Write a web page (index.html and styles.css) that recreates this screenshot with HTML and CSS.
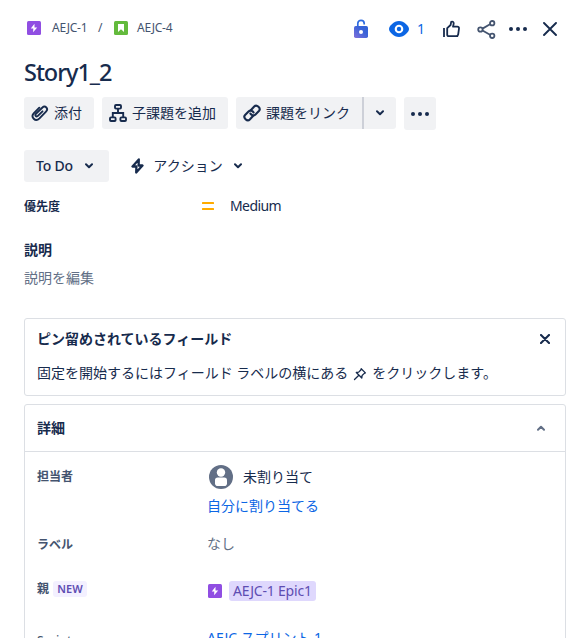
FILE: index.html
```html
<!DOCTYPE html>
<html lang="ja">
<head>
<meta charset="utf-8">
<title>Story1_2</title>
<link rel="stylesheet" href="styles.css">
</head>
<body>
<main class="issue">
  <header class="topbar">
    <nav class="crumbs">
      <svg class="type" width="14" height="14" viewBox="0 0 14 14"><rect width="14" height="14" rx="1.5" fill="#904ee2"/><path d="M7.500 2.700 3.800 7.500h2.500l-.2 3.800L10.200 6.400H7.500z" fill="#fff"/></svg>
      <span class="key">AEJC-1</span>
      <span class="slash">/</span>
      <svg class="type" width="14" height="14" viewBox="0 0 14 14"><rect width="14" height="14" rx="1.5" fill="#63ba3c"/><path d="M4 3h6v8L7 8.300 4 11z" fill="#fff"/></svg>
      <span class="key">AEJC-4</span>
    </nav>
    <div class="tools">
      <svg class="lock" width="14" height="20" viewBox="0 0 14 20"><defs><linearGradient id="lk" x1="0" y1="1" x2="1" y2="0"><stop offset="0" stop-color="#8270db"/><stop offset=".6" stop-color="#3b63d8"/><stop offset="1" stop-color="#2d62d8"/></linearGradient></defs><path d="M3.800 8V4.500C3.800 .2 10.200 .2 10.200 4.500V5.600" fill="none" stroke="#2d6be0" stroke-width="1.700"/><rect y="7" width="14" height="12" rx="1.700" fill="url(#lk)"/><circle cx="7" cy="13" r="2" fill="#fff"/></svg>
      <svg class="eye" width="20" height="16" viewBox="0 0 20 16"><path d="M10 0C4.800 0 0 5.200 0 8s4.800 8 10 8 10-5.200 10-8S15.200 0 10 0z" fill="#0c66e4"/><circle cx="10" cy="8" r="4.300" fill="#fff"/><circle cx="10" cy="8" r="2.200" fill="#0c66e4"/></svg>
      <span class="count">1</span>
      <svg class="thumb" width="17" height="18" viewBox="0 0 17 18"><g fill="none" stroke="#172b4d" stroke-width="1.800" stroke-linejoin="round"><path d="M1 8v9"/><path d="M4.200 8.200 7.600 5 8.200 1.900Q10.800 1 10.700 3.600L10 6.700h4.300q1.800 0 1.700 1.800l-.8 5.800q-.3 1.900-2 1.900H6q-1.800 0-1.800-1.800z"/></g></svg>
      <svg class="share" width="19" height="19" viewBox="0 0 19 19"><g fill="none" stroke="#44546f" stroke-width="1.800"><path d="M5.500 8.600 13 4.300M5.500 10.500l7.500 4.200"/><circle cx="3.400" cy="9.500" r="2.200"/><circle cx="15.200" cy="3.200" r="2.200"/><circle cx="15.200" cy="15.800" r="2.200"/></g></svg>
      <svg class="more" width="18" height="4" viewBox="0 0 18 4" fill="#172b4d"><circle cx="2" cy="2" r="2"/><circle cx="9" cy="2" r="2"/><circle cx="16" cy="2" r="2"/></svg>
      <svg class="close" width="14" height="14" viewBox="0 0 14 14"><path d="m1 1 12 12M13 1 1 13" stroke="#172b4d" stroke-width="1.900" stroke-linecap="round"/></svg>
    </div>
  </header>

  <h1 class="title">Story1_2</h1>

  <div class="actions">
    <button class="btn attach"><svg width="18" height="18" viewBox="0 0 18 18"><path d="m11.500 6.300-4.600 4.600c-1.500 1.500-3.400-.5-2-2l6.300-6.200c3-2.800 6.700 1 3.800 3.900L8.500 13.400c-4.200 4.100-9.300-1.400-5.600-5.300L8.300 2.700" fill="none" stroke="#172b4d" stroke-width="1.900" stroke-linecap="round" transform="translate(0 1)"/></svg><span>添付</span></button>
    <button class="btn child"><svg width="18" height="18" viewBox="0 0 18 18"><g fill="none" stroke="#172b4d" stroke-width="1.900"><rect x="6" y="1" width="6" height="3.600" rx="1"/><rect x="1" y="13.400" width="5.600" height="3.600" rx="1"/><rect x="11.400" y="13.400" width="5.600" height="3.600" rx="1"/><path d="M9 4.600V9M3.800 13.400V9h10.400v4.400"/></g></svg><span>子課題を追加</span></button>
    <div class="split">
      <button class="btn link"><svg width="18" height="18" viewBox="0 0 18 18"><g fill="none" stroke="#172b4d" stroke-width="2.100" stroke-linecap="round"><path d="M8 6 11.200 2.500c2.600-2.500 7.200 1.800 4.700 4.500L12.500 10.500C10.900 12 8.300 11.500 7.400 9.500"/><path d="M10 12 6.800 15.500C4.200 18 -.4 13.700 2.100 11L5.500 7.500C7.100 6 9.700 6.500 10.600 8.500"/></g></svg><span>課題をリンク</span></button>
      <button class="btn drop"><svg width="8" height="6" viewBox="0 0 8 6"><path d="m1 1.300 3 2.900 3-2.900" class="chev"/></svg></button>
    </div>
    <button class="btn dots"><svg width="18" height="4" viewBox="0 0 18 4" fill="#172b4d"><circle cx="2" cy="2" r="2"/><circle cx="9" cy="2" r="2"/><circle cx="16" cy="2" r="2"/></svg></button>
  </div>

  <div class="status-row">
    <button class="btn status"><span>To Do</span><svg width="8" height="6" viewBox="0 0 8 6"><path d="m1 1.300 3 2.900 3-2.900" class="chev"/></svg></button>
    <button class="automation"><svg width="13" height="16" viewBox="0 0 13 16"><path d="M7.800 1.500 1.500 8.500h3.900L5.200 14.500l6.300-7H7.600z" fill="none" stroke="#172b4d" stroke-width="2.300" stroke-linejoin="round"/></svg><span>アクション</span><svg width="8" height="6" viewBox="0 0 8 6"><path d="m1 1.300 3 2.900 3-2.900" class="chev"/></svg></button>
  </div>

  <div class="priority">
    <span class="priority-label">優先度</span>
    <svg width="12" height="8" viewBox="0 0 12 8" fill="#ffab00"><rect width="12" height="2" rx=".5"/><rect y="6" width="12" height="2" rx=".5"/></svg>
    <span class="medium">Medium</span>
  </div>

  <h2 class="desc-title">説明</h2>
  <p class="desc-edit">説明を編集</p>

  <section class="panel pinned">
    <div class="pinned-head"><h2>ピン留めされているフィールド</h2><svg width="10" height="10" viewBox="0 0 10 10"><path d="m1 1 8 8M9 1 1 9" stroke="#172b4d" stroke-width="2.100" stroke-linecap="round"/></svg></div>
    <p class="pinned-text"><span>固定を開始するにはフィールド ラベルの横にある</span><svg width="14" height="14" viewBox="0 0 14 14"><path d="m8.200 1.700 4.200 4.200-1.100.5-2.200 2.100-.3 2.500-5.500-5.500 2.400-.4L7.800 3zM5.600 8.500 1.500 12.500" fill="none" stroke="#172b4d" stroke-width="1.300" stroke-linejoin="round" stroke-linecap="round"/></svg><span>をクリックします。</span></p>
  </section>

  <section class="panel details">
    <div class="details-head"><h2>詳細</h2><svg width="8" height="6" viewBox="0 0 8 6"><path d="m1 4.700 3-2.900 3 2.900" class="chev muted"/></svg></div>
    <dl class="fields">
      <div class="field assignee"><dt>担当者</dt><dd>
        <div class="person"><svg width="24" height="24" viewBox="0 0 24 24"><circle cx="12" cy="12" r="12" fill="#626f86"/><circle cx="12" cy="7.500" r="4.200" fill="#fff"/><rect x="6" y="12.500" width="12" height="8.500" rx="2.800" fill="#fff"/></svg><span>未割り当て</span></div>
        <a class="blue">自分に割り当てる</a></dd></div>
      <div class="field labels"><dt>ラベル</dt><dd>なし</dd></div>
      <div class="field parent"><dt>親<span class="new">NEW</span></dt><dd><svg width="14" height="14" viewBox="0 0 14 14"><rect width="14" height="14" rx="1.500" fill="#904ee2"/><path d="M7.500 2.700 3.800 7.500h2.500l-.2 3.800L10.200 6.400H7.500z" fill="#fff"/></svg><a class="epic">AEJC-1 Epic1</a></dd></div>
      <div class="field sprint"><dt>Sprint</dt><dd><a class="blue">AEJC スプリント 1</a></dd></div>
    </dl>
  </section>
</main>
</body>
</html>
```
FILE: styles.css
```css
* { box-sizing: border-box; }
html, body { margin: 0; height: 638px; overflow: hidden; background: #fff; }
body { font: 14px/20px "Noto Sans", "Noto Sans CJK JP", sans-serif; color: #172b4d; }
h1, h2, p, dl, dd { margin: 0; }
h2 { font-size: 14px; line-height: 20px; font-weight: 600; }
svg { display: block; flex: none; }
button { border: 0; margin: 0; padding: 0; background: none; font: inherit; color: inherit; display: flex; align-items: center; white-space: nowrap; }
.issue { height: 638px; overflow: hidden; padding: 12px 12px 0 24px; display: flex; flex-direction: column; }
.issue > * { flex: none; }
.chev { fill: none; stroke: #172b4d; stroke-width: 2; stroke-linecap: round; stroke-linejoin: round; }
.muted { stroke: #626f86; }

.topbar { height: 34px; display: flex; justify-content: space-between; align-items: center; padding: 0 9px 0 3px; }
.crumbs { display: flex; align-items: center; height: 34px; padding-bottom: 2px; font-size: 12px; color: #44546f; }
.type { margin-right: 11px; }
.key { width: 37px; letter-spacing: -.2px; white-space: nowrap; }
.slash { width: 5px; margin: 0 11px 0 9px; }
.crumbs .slash + .type { margin-right: 9px; }
.tools { display: flex; align-items: center; }
.eye { margin-left: 21px; }
.count { width: 8px; margin-left: 8px; color: #0c66e4; }
.thumb { margin-left: 18px; }
.share { margin-left: 17px; }
.more { margin-left: 13px; }
.close { margin-left: 16px; }

.title { margin-top: 12px; height: 28px; font-size: 23.5px; line-height: 28px; font-weight: 500; letter-spacing: -1.05px; }
.actions { margin-top: 11px; height: 33px; display: flex; align-items: flex-start; gap: 8px; }
.btn { height: 32px; background: #f1f2f4; border-radius: 3px; }
.attach { width: 70px; padding-left: 7px; gap: 5px; }
.child { width: 126px; padding-left: 7px; gap: 5px; }
.split { display: flex; }
.link { width: 126px; padding-left: 7px; gap: 5px; border-radius: 3px 0 0 3px; }
.drop { width: 34px; border-left: 2px solid #cdd0d8; border-radius: 0 3px 3px 0; justify-content: center; }
.dots { width: 32px; height: 33px; justify-content: center; }

.status-row { margin-top: 20px; height: 32px; display: flex; }
.status { width: 85px; padding-left: 12px; font-weight: 500; letter-spacing: -.2px; }
.status span { width: 49px; text-align: left; }
.automation { height: 32px; margin-left: 22px; }
.automation span { width: 70px; margin: 0 11px 0 9px; }
.priority { margin-top: 14px; height: 20px; display: flex; align-items: center; }
.priority-label { width: 178px; font-size: 12px; font-weight: 600; padding-top: 1px; }
.medium { margin-left: 16px; letter-spacing: -.6px; }
.desc-title { margin-top: 24px; }
.desc-edit { margin-top: 8px; color: #626f86; }

.panel { border: 1px solid #dcdfe4; border-radius: 3px; }
.pinned { margin-top: 30px; height: 78px; padding: 10px 15px 0 12px; }
.pinned-head { display: flex; justify-content: space-between; align-items: center; height: 20px; }
.pinned-text { margin-top: 14px; display: flex; align-items: center; white-space: nowrap; }
.pinned-text svg { margin: 1px 5px 0 5px; }
.details { margin-top: 8px; height: 260px; }
.details-head { height: 47px; padding: 0 20px 0 12px; display: flex; justify-content: space-between; align-items: center; border-bottom: 1px solid #dcdfe4; }
.fields { padding: 12px 12px 0; }
.field { display: grid; grid-template-columns: 170px 1fr; align-items: start; }
.field dt { font-size: 12px; font-weight: 600; color: #44546f; display: flex; align-items: center; height: 25px; }
.field dd { white-space: nowrap; }
.person { display: flex; align-items: center; height: 26px; gap: 10px; padding-left: 2px; }
.blue { color: #0c66e4; }
.assignee { height: 70px; }
.assignee .blue { display: block; margin-top: 6px; }
.labels { height: 42px; }
.labels dd { color: #626f86; }
.labels dt { height: 22px; }
.parent { height: 52px; }
.parent dd { height: 30px; display: flex; align-items: center; gap: 7px; padding-left: 1px; }
.new { margin-left: 4px; width: 34px; height: 16px; line-height: 16px; text-align: center; border-radius: 3px; background: #f3f0ff; color: #5e4db2; font-size: 11px; font-weight: 600; }
.epic { width: 87px; height: 20px; padding-left: 4px; border-radius: 3px; background: #dfd8fd; color: #5e4db2; letter-spacing: -.2px; }
.sprint dt { font-weight: 500; }
.sprint .blue { letter-spacing: -.05px; }
```
